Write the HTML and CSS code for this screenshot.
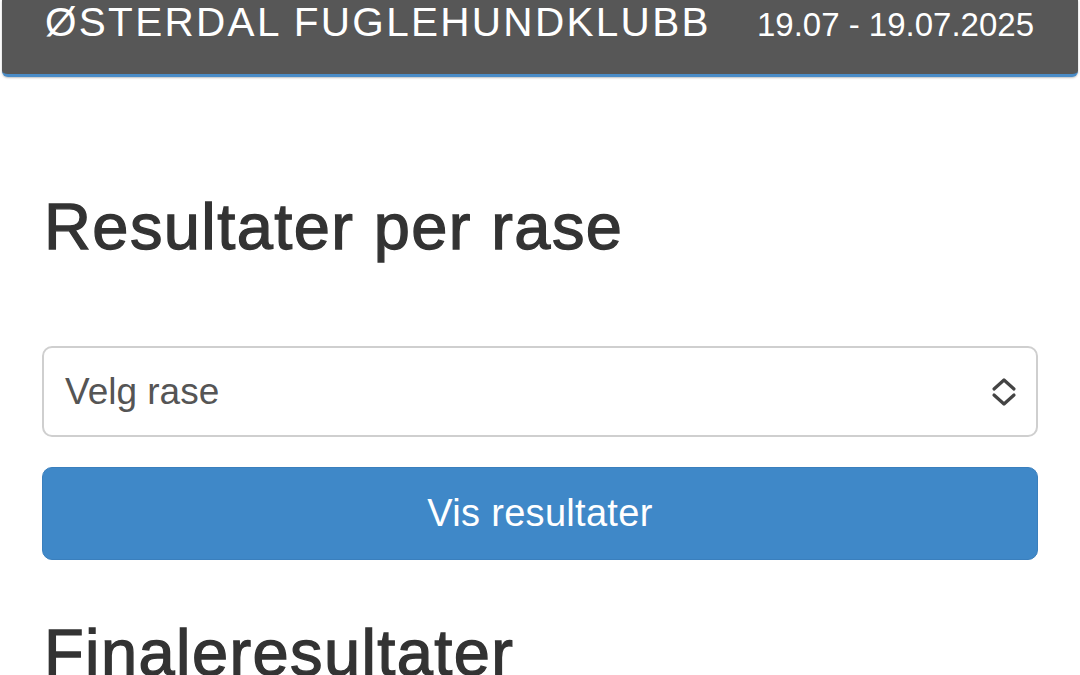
FILE: index.html
```html
<!DOCTYPE html>
<html lang="no">
<head>
<meta charset="utf-8">
<title>Resultater per rase</title>
<link rel="stylesheet" href="styles.css">
</head>
<body>
<header class="topbar">
  <div class="brand">ØSTERDAL FUGLEHUNDKLUBB</div>
  <div class="dates">19.07 - 19.07.2025</div>
</header>
<main class="content">
  <h1 class="title">Resultater per rase</h1>
  <div class="select">
    <span class="select-text">Velg rase</span>
    <svg class="select-arrows" width="28" height="30" viewBox="0 0 28 30" aria-hidden="true">
      <path d="M4 12 L14 3 L24 12" fill="none" stroke="#444" stroke-width="3.2" stroke-linecap="round" stroke-linejoin="round"/>
      <path d="M4 18 L14 27 L24 18" fill="none" stroke="#444" stroke-width="3.2" stroke-linecap="round" stroke-linejoin="round"/>
    </svg>
  </div>
  <button class="btn">Vis resultater</button>
  <h1 class="title title-final">Finaleresultater</h1>
</main>
</body>
</html>
```
FILE: styles.css
```css
html, body {
  margin: 0;
  padding: 0;
  background: #ffffff;
  font-family: "Liberation Sans", Arial, sans-serif;
  overflow: hidden;
}
.topbar {
  margin: 0 2px;
  height: 72px;
  background: #575757;
  border-bottom: 3px solid #4a8cc7;
  border-radius: 0 0 6px 6px;
  display: flex;
  align-items: baseline;
  padding: 2px 44px 0 43px;
  box-sizing: content-box;
  color: #ffffff;
  box-shadow: 0 1px 2px rgba(0,0,0,0.25);
}
.brand {
  font-size: 40.5px;
  line-height: 40px;
  letter-spacing: 2.3px;
  white-space: nowrap;
}
.dates {
  margin-left: auto;
  font-size: 33px;
  line-height: 40px;
  white-space: nowrap;
}
.content {
  padding: 0 42px;
}
.title {
  margin: 0;
  font-weight: normal;
  font-size: 65px;
  line-height: 80px;
  letter-spacing: 1.4px;
  color: #333333;
  -webkit-text-stroke: 1.3px #333333;
  padding-top: 110px;
  padding-left: 2px;
}
.select {
  margin-top: 79px;
  height: 87px;
  border: 2px solid #cfcfcf;
  border-radius: 10px;
  display: flex;
  align-items: center;
  padding: 0 18px 0 21px;
}
.select-text {
  font-size: 37px;
  color: #555555;
}
.select-arrows {
  margin-left: auto;
}
.btn {
  display: block;
  width: 100%;
  margin-top: 30px;
  height: 93px;
  background: #3f88c8;
  border: 1px solid #3a7fbd;
  border-radius: 10px;
  color: #ffffff;
  font-family: "Liberation Sans", Arial, sans-serif;
  font-size: 38px;
  letter-spacing: 0.3px;
}
.title-final {
  padding-top: 53px;
}
```
